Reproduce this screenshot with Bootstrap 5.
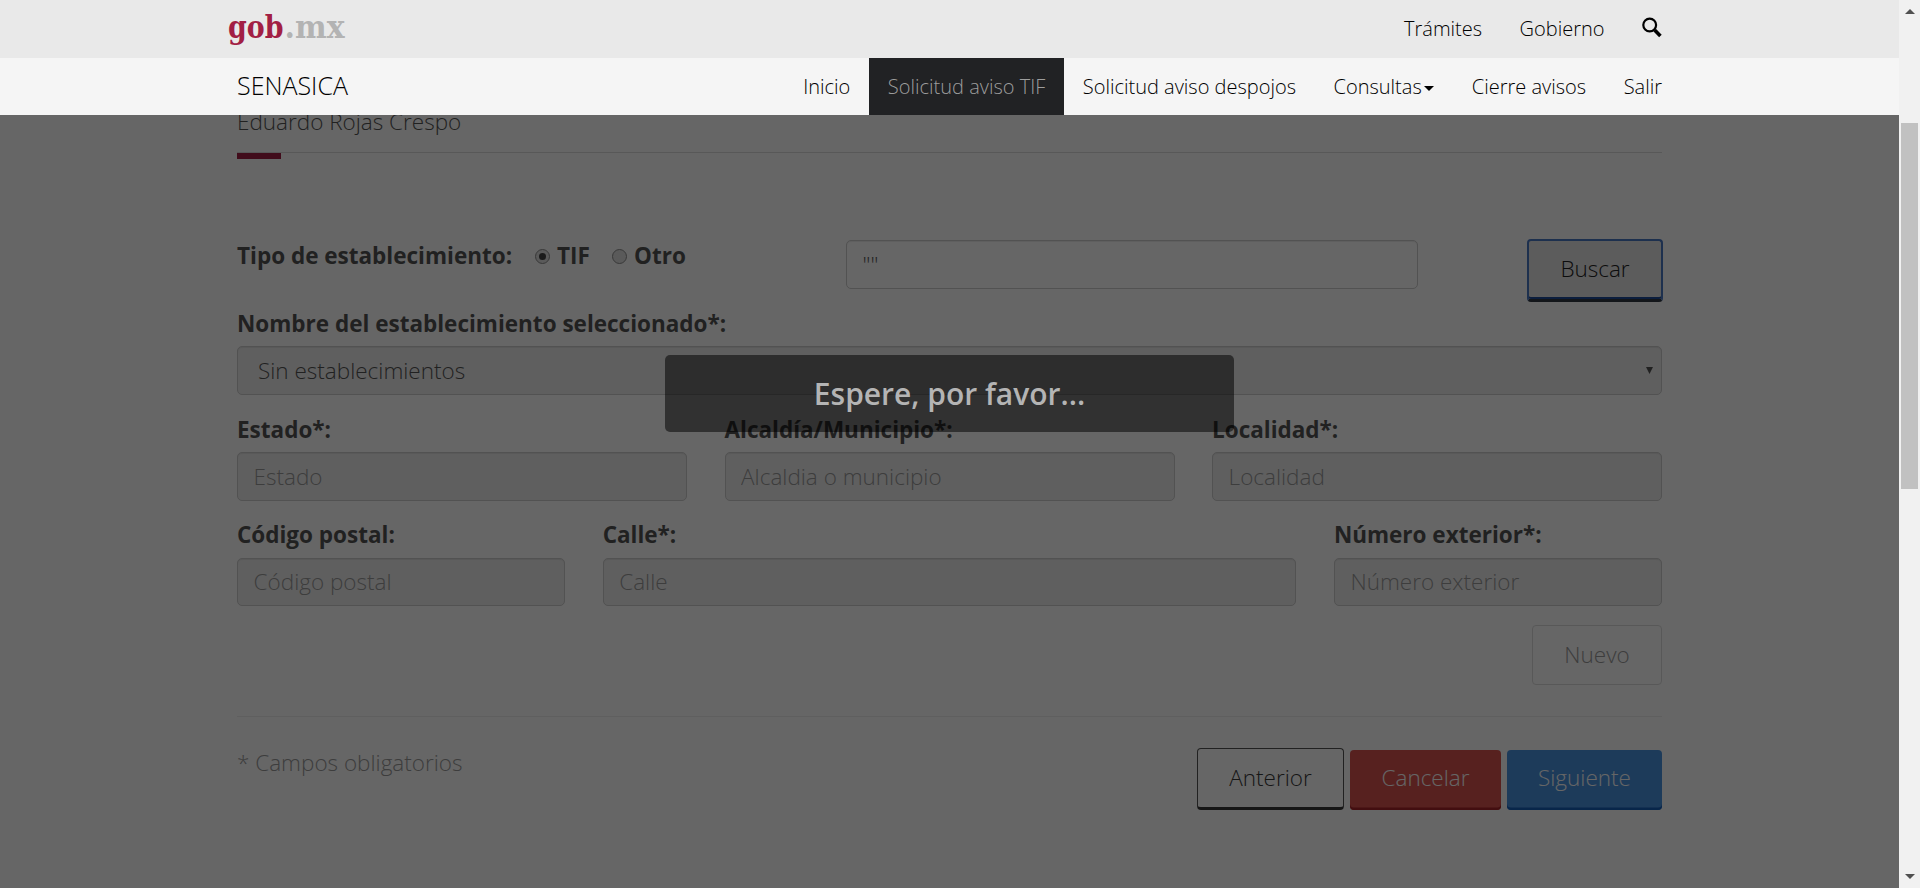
<!DOCTYPE html>
<html lang="es">
<head>
<meta charset="utf-8">
<title>SENASICA</title>
<link href="https://cdn.jsdelivr.net/npm/bootstrap@5.3.0/dist/css/bootstrap.min.css" rel="stylesheet">
<style>
body{font-family:"Open Sans","Noto Sans",sans-serif;font-weight:300;font-size:22.5px;line-height:32px;color:#545454;background:#fff;overflow:hidden}
.screen{height:888px}
.app-view{width:1899px;overflow:hidden}
.wrap{width:1425px;margin-left:237px}
.site-header{z-index:30}
.gov-bar{height:58px;background:#e9e9e9}
.gov-bar .wrap{height:58px;color:#000;font-size:20px}
.gov-logo{margin-left:-9px}
.gov-link{margin-right:37.5px}
.gov-search{margin-top:-4px}
.sub-bar{height:57px;background:#f5f5f5;color:#000}
.sub-brand{font-size:25px;margin-top:-4px}
.menu-link{height:57px;line-height:56px;padding:0 18.75px;font-size:20px;color:#000;text-decoration:none;white-space:nowrap;display:flex;align-items:center}
.menu-link.current{background:#212224;color:#9d9d9d}
.caret-down{border:5px solid transparent;border-top-color:#000;border-bottom:0;margin:3px 0 0 2.6px}
.page-main{padding-top:106px}
.user-name{height:47px;border-bottom:1px solid #ddd}
.accent{width:44px;height:6px;background:#a21f44;margin-bottom:80px}
.kind-row{height:68px}
.kind{width:609px;font-weight:700;padding-top:1px}
.lbl{display:block;font-weight:700;line-height:32px;padding-top:1px;margin-bottom:6px;white-space:nowrap}
.lbl.up{padding-top:0;margin-bottom:7px}
.field{height:49px;border:1px solid #ccc;border-radius:5px;padding:0 15.6px 1px;font-size:22.5px;font-weight:300;line-height:32px;color:#545454;box-shadow:inset 0 1px 1px rgba(0,0,0,.075)}
.field:disabled{background:#eee;opacity:1}
.field::placeholder{color:#999;opacity:1}
.field.short{height:48px;margin-bottom:1px}
.field.pick{background:#eee;padding:0 8px 0 20px}
.grp{margin-bottom:18px}
.g-fields{--bs-gutter-x:37.5px}
.radio-dot{width:15px;height:15px;border:1px solid #8e8e8e;border-radius:50%;background:#e0e0e0;display:flex;align-items:center;justify-content:center}
.radio-dot.on::after{content:"";width:7px;height:7px;border-radius:50%;background:#444}
.act{border-radius:4px;font-size:22.5px;font-weight:300;line-height:32px;height:60px;padding:0;border:0}
.act-search{width:136px;height:63px;background:#e6e6e6;border:2px solid #4a78c4;border-bottom:3px solid #303843;color:#222;margin-right:-1px;padding-bottom:2px;box-shadow:inset 0 -2px #1f4c98}
.btn.act-new:disabled{width:130px;border:1px solid #dcdcdc;color:#999;background:#fff;opacity:1}
.act-prev{width:147px;height:62px;border:1px solid #545454;border-bottom:3px solid #393939;color:#393939;padding-bottom:1px}
.act-cancel{width:151px;background:#d9534f;color:#fff;padding-bottom:5px;box-shadow:inset 0 -2.5px #a82528}
.act-next{width:155px;background:#4a93e2;color:#fff;padding-bottom:5px;box-shadow:inset 0 -2.5px #165fb9}
.rule{height:1px;background:#eee;margin:31px 0}
.required-note{color:#999;margin-top:-1px}
.veil{z-index:10;background:rgba(0,0,0,.6)}
.wait-box{z-index:40;left:665px;top:355px;width:569px;height:77px;border-radius:5px;background:rgba(0,0,0,.52);color:#b4b4b4;font-size:30px;font-weight:600;line-height:77px}
.scroll-track{width:21px;background:#f1f1f1}
.scroll-thumb{width:17px;height:366px;margin-top:109px;background:#c1c1c1}
.arrow{width:0;height:0;border:5px solid transparent}
.arrow-up{border-top:0;border-bottom-color:#505050;margin-top:9px}
.arrow-dn{border-bottom:0;border-top-color:#505050;margin-bottom:9px}
</style>
</head>
<body>
<div class="screen d-flex">
  <div class="app-view position-relative">
    <header class="site-header position-absolute top-0 start-0 w-100">
      <div class="gov-bar">
        <div class="wrap d-flex align-items-center">
          <svg class="gov-logo me-auto" width="125" height="58" viewBox="0 0 125 58" font-family="DejaVu Serif" font-weight="bold" font-size="31.5"><text y="38"><tspan x="0" textLength="55.5" lengthAdjust="spacingAndGlyphs" fill="#a21f44">gob</tspan><tspan x="56.5" textLength="60" lengthAdjust="spacingAndGlyphs" fill="#b3b3b3">.mx</tspan></text></svg>
          <span class="gov-link">Trámites</span>
          <span class="gov-link">Gobierno</span>
          <svg class="gov-search" width="20" height="21" viewBox="0 0 20 21" fill="none" stroke="#000"><circle cx="7.7" cy="8" r="6.4" stroke-width="2.2"/><path d="M12.6 13l5.8 6" stroke-width="3.6"/></svg>
        </div>
      </div>
      <nav class="sub-bar">
        <div class="wrap d-flex align-items-center">
          <span class="sub-brand me-auto">SENASICA</span>
          <a class="menu-link">Inicio</a>
          <a class="menu-link current">Solicitud aviso TIF</a>
          <a class="menu-link">Solicitud aviso despojos</a>
          <a class="menu-link">Consultas<i class="caret-down"></i></a>
          <a class="menu-link">Cierre avisos</a>
          <a class="menu-link pe-0">Salir</a>
        </div>
      </nav>
    </header>
    <main class="page-main wrap">
      <div class="user-name">Eduardo Rojas Crespo</div>
      <div class="accent"></div>
      <div class="kind-row d-flex align-items-start">
        <div class="kind d-flex align-items-center">
          <span style="width:298px">Tipo de establecimiento:</span>
          <i class="radio-dot on"></i><span style="width:62px;padding-left:7px">TIF</span>
          <i class="radio-dot"></i><span style="padding-left:7px">Otro</span>
        </div>
        <div style="width:572px;margin-top:1px"><input class="form-control field" value='""'></div>
        <button class="btn act act-search ms-auto">Buscar</button>
      </div>
      <div class="grp">
        <span class="lbl">Nombre del establecimiento seleccionado*:</span>
        <div class="field pick d-flex align-items-center justify-content-between"><span>Sin establecimientos</span><svg width="7" height="7"><path d="M0 0h7L3.5 7z" fill="#545454"/></svg></div>
      </div>
      <div class="row g-fields">
        <div class="col-4 grp"><span class="lbl">Estado*:</span><input class="form-control field" placeholder="Estado" disabled></div>
        <div class="col-4 grp"><span class="lbl">Alcaldía/Municipio*:</span><input class="form-control field" placeholder="Alcaldia o municipio" disabled></div>
        <div class="col-4 grp"><span class="lbl">Localidad*:</span><input class="form-control field" placeholder="Localidad" disabled></div>
      </div>
      <div class="row g-fields">
        <div class="col-3 grp"><span class="lbl up">Código postal:</span><input class="form-control field short" placeholder="Código postal" disabled></div>
        <div class="col-6 grp"><span class="lbl up">Calle*:</span><input class="form-control field short" placeholder="Calle" disabled></div>
        <div class="col-3 grp"><span class="lbl up">Número exterior*:</span><input class="form-control field short" placeholder="Número exterior" disabled></div>
      </div>
      <div class="d-flex justify-content-end"><button class="btn act act-new" disabled>Nuevo</button></div>
      <div class="rule"></div>
      <div class="d-flex align-items-end">
        <span class="required-note me-auto align-self-start">* Campos obligatorios</span>
        <div class="d-flex align-items-end" style="gap:6px">
          <button class="btn act act-prev">Anterior</button>
          <button class="btn act act-cancel">Cancelar</button>
          <button class="btn act act-next">Siguiente</button>
        </div>
      </div>
    </main>
    <div class="veil position-absolute top-0 start-0 w-100 h-100"></div>
    <div class="wait-box position-absolute text-center">Espere, por favor...</div>
  </div>
  <div class="scroll-track d-flex flex-column align-items-center">
    <div class="arrow arrow-up"></div>
    <div class="scroll-thumb"></div>
    <div class="arrow arrow-dn mt-auto"></div>
  </div>
</div>
<script src="https://cdn.jsdelivr.net/npm/bootstrap@5.3.0/dist/js/bootstrap.bundle.min.js"></script>
</body>
</html>
